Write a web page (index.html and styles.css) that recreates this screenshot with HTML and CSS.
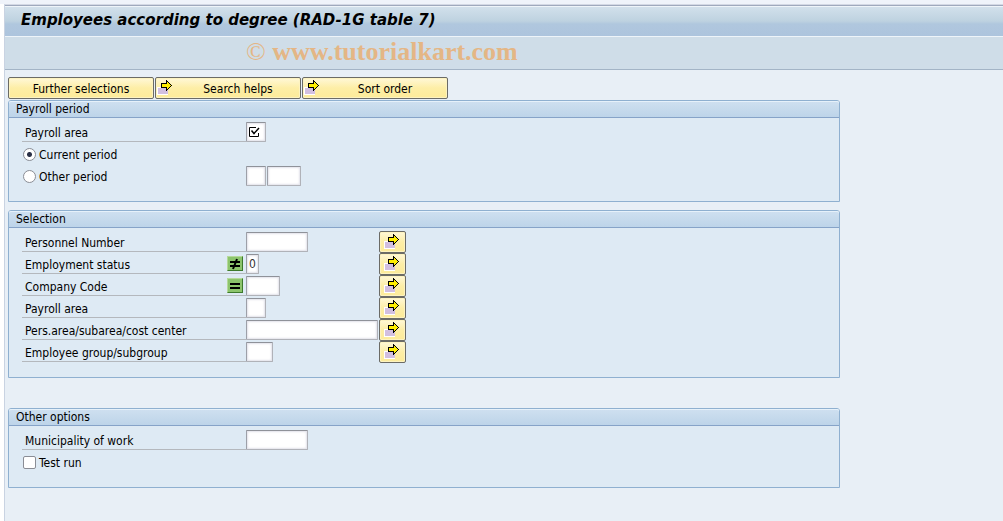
FILE: index.html
```html
<!DOCTYPE html>
<html lang="en">
<head>
    <meta charset="UTF-8">
    <meta name="viewport" content="width=device-width, initial-scale=1.0">
    <title>Employees according to degree (RAD-1G table 7)</title>
    <link rel="stylesheet" href="styles.css">
</head>
<body>
    <!-- arrow icon shared by all the multiple selection buttons -->
    <svg class="sprite" aria-hidden="true">
        <symbol id="arrow" viewBox="0 0 16 16">
            <path fill="#ffffff" d="M0 7h11v8H0z"/>
            <path fill="#d2bfe0" d="M1 8h10v6H1z"/>
            <path fill="#000000" d="M4 3h5V0h1v1h1v1h1v1h1v1h1v1h1v1h-1v1h-1v1h-1v1h-1v1h-1v1H9V8H4z"/>
            <path fill="#ffee00" d="M5 4h5V2h1v1h1v1h1v1h1v1h-1v1h-1v1h-1v1h-1V7H5z"/>
        </symbol>
    </svg>
    <div class="window">
        <header class="title-bar">
            <h1>Employees according to degree (RAD-1G table 7)</h1>
        </header>
        <div class="toolbar">
            <p class="watermark"><span class="copy">©</span> www.tutorialkart.com</p>
        </div>
        <main>
            <div class="buttons">
                <button type="button" class="btn"><span>Further selections</span></button>
                <button type="button" class="btn"><svg class="icon"><use href="#arrow"/></svg><span>Search helps</span></button>
                <button type="button" class="btn"><svg class="icon"><use href="#arrow"/></svg><span>Sort order</span></button>
            </div>
            <form>
                <section class="group">
                    <h2>Payroll period</h2>
                    <div class="rows">
                        <div class="row">
                            <div class="caption"><label for="area">Payroll area</label></div>
                            <div class="field required">
                                <input type="text" id="area" class="w2" required>
                                <svg class="mark" viewBox="0 0 12 12"><path d="M8 1.5H1.5v9h9V7" fill="none" stroke="#000"/><path d="M3.500 4.500L6 7.500l5-5.500" fill="none" stroke="#000" stroke-width="1.500"/></svg>
                            </div>
                        </div>
                        <div class="row">
                            <div class="choice"><input type="radio" name="period" id="current" checked><label for="current">Current period</label></div>
                        </div>
                        <div class="row">
                            <div class="choice"><input type="radio" name="period" id="other"><label for="other">Other period</label></div>
                            <div class="field">
                                <input type="text" class="w2" aria-label="Period">
                                <input type="text" class="w4" aria-label="Year">
                            </div>
                        </div>
                    </div>
                </section>

                <section class="group selection">
                    <h2>Selection</h2>
                    <div class="rows">
                        <div class="row">
                            <div class="caption"><label for="pernr">Personnel Number</label></div>
                            <div class="field"><input type="text" id="pernr" class="w8"></div>
                            <button type="button" class="more" aria-label="Multiple selection"><svg class="icon"><use href="#arrow"/></svg></button>
                        </div>
                        <div class="row">
                            <div class="caption">
                                <label for="status">Employment status</label>
                                <button type="button" class="op" aria-label="Not equal"><svg viewBox="0 0 12 12"><path d="M1 4h10M1 8h10M8 1L4 11" fill="none" stroke="#000" stroke-width="2"/></svg></button>
                            </div>
                            <div class="field"><input type="text" id="status" class="w1" value="0"></div>
                            <button type="button" class="more" aria-label="Multiple selection"><svg class="icon"><use href="#arrow"/></svg></button>
                        </div>
                        <div class="row">
                            <div class="caption">
                                <label for="company">Company Code</label>
                                <button type="button" class="op" aria-label="Equal"><svg viewBox="0 0 12 12"><path d="M1 4h10M1 8h10" fill="none" stroke="#000" stroke-width="2"/></svg></button>
                            </div>
                            <div class="field"><input type="text" id="company" class="w4"></div>
                            <button type="button" class="more" aria-label="Multiple selection"><svg class="icon"><use href="#arrow"/></svg></button>
                        </div>
                        <div class="row">
                            <div class="caption"><label for="area2">Payroll area</label></div>
                            <div class="field"><input type="text" id="area2" class="w2"></div>
                            <button type="button" class="more" aria-label="Multiple selection"><svg class="icon"><use href="#arrow"/></svg></button>
                        </div>
                        <div class="row">
                            <div class="caption"><label for="cost">Pers.area/subarea/cost center</label></div>
                            <div class="field"><input type="text" id="cost" class="w18"></div>
                            <button type="button" class="more" aria-label="Multiple selection"><svg class="icon"><use href="#arrow"/></svg></button>
                        </div>
                        <div class="row">
                            <div class="caption"><label for="empgroup">Employee group/subgroup</label></div>
                            <div class="field"><input type="text" id="empgroup" class="w3"></div>
                            <button type="button" class="more" aria-label="Multiple selection"><svg class="icon"><use href="#arrow"/></svg></button>
                        </div>
                    </div>
                </section>

                <section class="group">
                    <h2>Other options</h2>
                    <div class="rows">
                        <div class="row">
                            <div class="caption"><label for="work">Municipality of work</label></div>
                            <div class="field"><input type="text" id="work" class="w8"></div>
                        </div>
                        <div class="row">
                            <div class="choice"><input type="checkbox" id="test"><label for="test">Test run</label></div>
                        </div>
                    </div>
                </section>
            </form>
        </main>
    </div>
</body>
</html>
```
FILE: styles.css
```css
* {
    box-sizing: border-box;
}
body {
    margin: 0;
    padding: 4px 0 0 4px;
    min-height: 100vh;
    display: flex;
    background: linear-gradient(#eff3fa, #eff3fa) top / 100% 4px no-repeat #ffffff;
    color: #000000;
    font-family: "DejaVu Sans Condensed", "DejaVu Sans", Tahoma, sans-serif;
    font-size: 12px;
}
.sprite {
    position: absolute;
    width: 0;
    height: 0;
}
.window {
    flex: 1;
    border-top: 1px solid #d3d8e4;
    border-left: 1px solid #c9d3e2;
    background-color: #e8eff6;
}
.title-bar {
    height: 32px;
    padding-left: 16px;
    padding-bottom: 3px;
    display: flex;
    align-items: center;
    border-top: 1px solid #9fa9bd;
    border-bottom: 1px solid #eef4f9;
    box-shadow: inset 0 1px #eef4f9;
    background: linear-gradient(#d3e1ec, #bed2e0 50%, #b0c7de 60%, #adc4dd);
}
.title-bar h1 {
    margin: 0;
    font-family: "DejaVu Sans", Verdana, sans-serif;
    font-size: 15px;
    font-style: italic;
    font-weight: bold;
}
.toolbar {
    height: 33px;
    padding-left: 241px;
    display: flex;
    align-items: center;
    border-bottom: 1px solid #a3b4c6;
    background-color: #cfdde8;
}
.watermark {
    margin: 0;
    padding-bottom: 2px;
    color: #e4b685;
    font-family: "Liberation Serif", serif;
    font-size: 26px;
    font-weight: bold;
    line-height: 28px;
}
.copy {
    font-weight: normal;
}
main {
    padding: 7px 3px;
}
.buttons {
    display: flex;
    gap: 1px;
    margin-bottom: 1px;
}
button {
    display: flex;
    align-items: center;
    color: #000000;
    font: inherit;
}
.btn,
.more {
    height: 22px;
    border: 1px solid #6b6b66;
    border-radius: 2px;
    background: linear-gradient(#fff8d8, #fdeea6 50%, #fdeb9a);
    box-shadow: inset 0 0 0 1px #fdf3c0;
}
.btn {
    width: 146px;
    padding: 0 1px;
    gap: 4px;
}
.btn span {
    flex: 1;
    padding-top: 1px;
    text-align: center;
}
.more {
    width: 27px;
    padding: 0 4px;
}
.icon {
    width: 16px;
    height: 16px;
    flex: none;
    shape-rendering: crispEdges;
}
.group {
    max-width: 832px;
    margin-bottom: 8px;
    border: 1px solid #8fb0d0;
    border-radius: 3px 3px 0 0;
    background-color: #deeaf4;
}
.selection {
    margin-bottom: 30px;
}
.group h2 {
    margin: 0;
    height: 17px;
    padding-left: 7px;
    border-bottom: 1px solid #86a3c8;
    border-radius: 2px 2px 0 0;
    background: linear-gradient(#cfe0f0, #bdd4e9);
    box-shadow: inset 0 1px #e6f1fa;
    font-size: 12px;
    font-weight: normal;
    line-height: 16px;
}
.rows {
    padding: 3px 13px 14px;
}
.row {
    display: flex;
    align-items: center;
    height: 22px;
}
.caption,
.choice {
    width: 224px;
    height: 20px;
    display: flex;
    align-items: center;
}
.caption {
    justify-content: space-between;
    padding: 0 3px;
    border-bottom: 1px solid #b4b8bd;
}
label {
    padding-top: 2px;
}
.field {
    width: 133px;
    display: flex;
    gap: 1px;
}
.required {
    position: relative;
}
.mark {
    position: absolute;
    left: 2px;
    top: 4px;
    width: 12px;
    height: 12px;
    pointer-events: none;
}
input {
    margin: 0;
    color: #333333;
    font: inherit;
}
input[type="text"] {
    height: 20px;
    padding: 0 2px;
    border: 1px solid #b0b2b8;
    border-top-color: #8f9299;
    border-left-color: #9da0a8;
    border-radius: 1px;
    background-color: #ffffff;
    box-shadow: inset 0 0 2px 1px #e2e2ea;
    outline: none;
}
.w1 { width: 13px; }
.w2 { width: 20px; }
.w3 { width: 27px; }
.w4 { width: 34px; }
.w8 { width: 62px; }
.w18 { width: 132px; }
.choice {
    padding-left: 1px;
    gap: 3px;
}
input[type="radio"],
input[type="checkbox"] {
    appearance: none;
    width: 13px;
    height: 13px;
    border: 1px solid #8a8d95;
    background-color: #ffffff;
}
input[type="radio"] {
    border-radius: 50%;
}
input[type="radio"]:checked {
    background: radial-gradient(circle, #2b3147 2px, #ffffff 3px);
}
input[type="checkbox"] {
    border-radius: 2px;
}
.op {
    width: 16px;
    height: 15px;
    padding: 1px;
    border: 1px solid #b5d99a;
    border-right-color: #3d7a2c;
    border-bottom-color: #3d7a2c;
    background-color: #8cc46c;
}
.op svg {
    width: 12px;
    height: 12px;
}
```
